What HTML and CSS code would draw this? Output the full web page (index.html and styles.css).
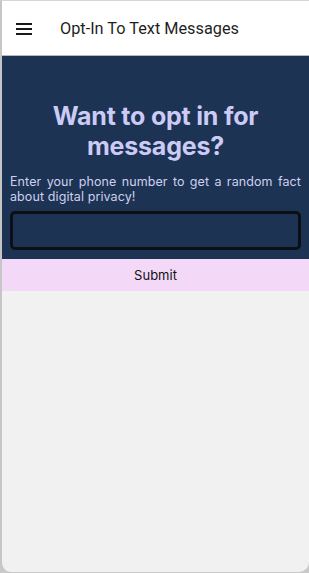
FILE: index.html
```html
<!DOCTYPE html>
<html lang="en">
<head>
<meta charset="UTF-8" />
<title>Opt-In To Text Messages</title>
<link rel="stylesheet" href="styles.css">
</head>
<body>
<div class="screen">

  <!-- top bar -->
  <header class="top-bar">
    <button class="menu-btn" title="Menu">
      <svg width="16" height="12" viewBox="0 0 16 12">
        <rect x="0" y="0" width="16" height="2" fill="#1a1a1a"/>
        <rect x="0" y="5" width="16" height="2" fill="#1a1a1a"/>
        <rect x="0" y="10" width="16" height="2" fill="#1a1a1a"/>
      </svg>
    </button>
    <h1 class="top-title">Opt-In To Text Messages</h1>
  </header>

  <!-- opt-in form -->
  <section class="optin">
    <h2 class="optin-heading">Want to opt in for messages?</h2>
    <p class="optin-text">Enter your phone number to get a random fact about digital privacy!</p>
    <input class="phone-input" type="tel">
  </section>
  <button class="submit-btn">Submit</button>

  <div class="rest"></div>
</div>
</body>
</html>
```
FILE: styles.css
```css
html,body{margin:0;padding:0;height:100%;background:#c9c9c9}
body{font-family:Inter,"Noto Sans",sans-serif}
.screen{height:572px;box-sizing:border-box;display:flex;flex-direction:column;background:#f1f1f1;
        border-top:1px solid #d6d6d6;border-left:2px solid #c6c6c6;border-radius:0 0 10px 10px;overflow:hidden}
.top-bar{display:flex;align-items:center;height:54px;background:#fff;border-bottom:1px solid #b9b9b9;flex:none}
.menu-btn{background:none;border:none;padding:0;margin:2px 0 0 14px;display:flex;cursor:pointer}
.top-title{margin:0 0 0 28px;font-family:Roboto,sans-serif;font-size:16.3px;font-weight:400;color:#1f1f1f}
.optin{background:#1d3353;padding:45px 8px 9px;flex:none}
.optin-heading{margin:0 auto 13px;width:230px;text-align:center;font-size:25px;line-height:30px;font-weight:700;color:#cbcbf6;letter-spacing:-.2px}
.optin-text{margin:0 0 7px;font-size:12.5px;line-height:15px;color:#cdd0ee;text-align:justify;letter-spacing:.1px}
.phone-input{display:block;width:100%;height:39px;box-sizing:border-box;background:#1d3353;border:3px solid #0d0f16;border-radius:5px;color:#fff}
.submit-btn{display:block;width:100%;height:32px;background:#f3d8f8;border:none;font-family:inherit;font-size:13px;color:#111;cursor:pointer;flex:none}
.rest{flex:1}
```
